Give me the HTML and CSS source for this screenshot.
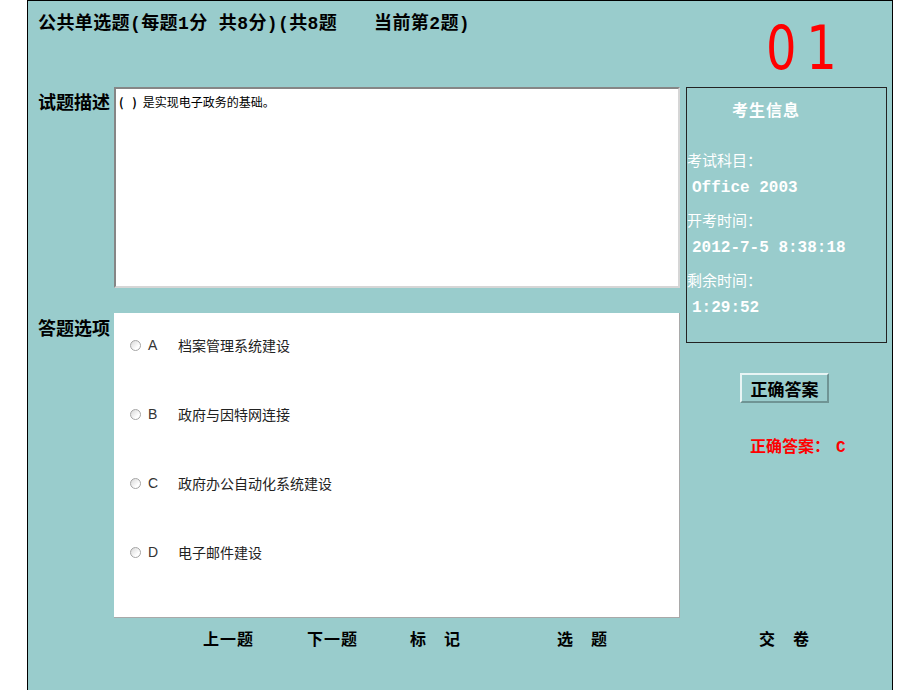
FILE: index.html
```html
<!DOCTYPE html>
<html lang="zh-CN">
<head>
<meta charset="utf-8">
<title>考试</title>
<link rel="stylesheet" href="styles.css">
</head>
<body>
<div class="frame">
  <header class="head">
    <h1 class="title">公共单选题(每题1分 共8分)(共8题　　当前第2题)</h1>
    <div class="counter">01</div>
  </header>
  <div class="main">
    <div class="qa">
      <div class="label">试题描述</div>
      <div class="question"><span class="paren">( )</span>是实现电子政务的基础。</div>
      <div class="label">答题选项</div>
      <div class="answers">
        <label class="opt"><span class="radio"></span><span class="letter">A</span><span class="otext">档案管理系统建设</span></label>
        <label class="opt"><span class="radio"></span><span class="letter">B</span><span class="otext">政府与因特网连接</span></label>
        <label class="opt"><span class="radio"></span><span class="letter">C</span><span class="otext">政府办公自动化系统建设</span></label>
        <label class="opt"><span class="radio"></span><span class="letter">D</span><span class="otext">电子邮件建设</span></label>
      </div>
    </div>
    <aside class="side">
      <div class="info">
        <div class="info-title">考生信息</div>
        <div class="info-label first">考试科目：</div>
        <div class="info-value">Office 2003</div>
        <div class="info-label">开考时间：</div>
        <div class="info-value">2012-7-5 8:38:18</div>
        <div class="info-label">剩余时间：</div>
        <div class="info-value">1:29:52</div>
      </div>
      <button class="btn" type="button">正确答案</button>
      <div class="correct">正确答案：<span class="answer-letter">C</span></div>
    </aside>
  </div>
  <nav class="nav">
    <span>上一题</span>
    <span>下一题</span>
    <span class="wide">标　记</span>
    <span class="wide">选　题</span>
    <span class="wide">交　卷</span>
  </nav>
</div>
</body>
</html>
```

FILE: styles.css
```css
html, body {
  margin: 0;
  height: 100%;
  overflow: hidden;
  background: #ffffff;
}

.frame {
  margin-left: 27px;
  width: 866px;
  height: 720px;
  box-sizing: border-box;
  border: 1px solid #000;
  border-bottom: none;
  background: #99cccc;
  font-family: "Noto Sans CJK SC", sans-serif;
  color: #000;
}

.head {
  display: flex;
  justify-content: space-between;
  align-items: flex-start;
  height: 86px;
}

.title {
  margin: 0;
  padding: 11px 0 0 10px;
  font: bold 18px/24px "Liberation Mono", "Noto Sans CJK SC", monospace;
  letter-spacing: 0.4px;
}

.counter {
  margin: 17px 26px 0 0;
  font: 60px/60px "DejaVu Sans", sans-serif;
  letter-spacing: 12px;
  color: #ff0000;
  transform: scaleX(0.8);
  transform-origin: 0 0;
}

.main {
  display: flex;
  align-items: flex-start;
}

.qa {
  display: grid;
  grid-template-columns: 86px 566px;
  grid-template-rows: 201px 305px;
  row-gap: 25px;
}

.label {
  padding: 2px 0 0 10px;
  font: bold 18px/24px "Noto Sans CJK SC", sans-serif;
}

.question {
  box-sizing: border-box;
  background: #fff;
  border: 2px solid;
  border-color: #868686 #d6d6d6 #d6d6d6 #868686;
  padding: 5px 3px;
  font: 12px/16px "Noto Sans CJK SC", sans-serif;
  color: #000;
}

.paren {
  font-weight: bold;
  letter-spacing: 3px;
  margin-right: 3px;
}

.answers {
  box-sizing: border-box;
  background: #fff;
  border-right: 1px solid #a9a9a9;
  border-bottom: 1px solid #a9a9a9;
  padding-top: 22px;
}

.opt {
  display: flex;
  align-items: center;
  height: 20px;
  margin-bottom: 49px;
  padding-left: 16px;
}

.radio {
  width: 11px;
  height: 11px;
  box-sizing: border-box;
  border-radius: 50%;
  border: 1px solid #a5a5a5;
  background: linear-gradient(135deg, #d8d8d8, #ffffff 70%);
}

.letter {
  width: 30px;
  margin-left: 7px;
  font: 14px/20px "Liberation Sans", sans-serif;
  color: #333;
}

.otext {
  font: 14px/20px "Noto Sans CJK SC", sans-serif;
  color: #222;
}

.side {
  margin-left: 6px;
  width: 201px;
}

.info {
  height: 256px;
  box-sizing: border-box;
  border: 1px solid #222;
  color: #fff;
}

.info-title {
  margin-top: 11px;
  padding-left: 45px;
  font: bold 16px/20px "Noto Sans CJK SC", sans-serif;
  letter-spacing: 1px;
}

.info-label {
  margin-top: 12px;
  padding-left: 0;
  font: 15px/20px "Noto Sans CJK SC", sans-serif;
}

.info-label.first {
  margin-top: 31px;
}

.info-value {
  margin-top: 8px;
  padding-left: 5px;
  font: bold 16px/20px "Liberation Mono", monospace;
}

.btn {
  display: block;
  margin: 30px 0 0 54px;
  width: 89px;
  height: 30px;
  padding: 0;
  background: #99cccc;
  border: 2px solid;
  border-color: #e8f4f4 #6f9494 #6f9494 #e8f4f4;
  font: bold 17px/1 "Noto Sans CJK SC", sans-serif;
  color: #000;
}

.correct {
  margin: 35px 0 0 64px;
  color: #f00;
  font: bold 16px/20px "Liberation Mono", "Noto Sans CJK SC", monospace;
}

.answer-letter {
  margin-left: 6px;
}

.nav {
  display: grid;
  grid-template-columns: 104px 103px 147px 202px auto;
  margin-top: 10px;
  padding-left: 175px;
  font: bold 16px/20px "Noto Sans CJK SC", sans-serif;
  letter-spacing: 1px;
}
```
